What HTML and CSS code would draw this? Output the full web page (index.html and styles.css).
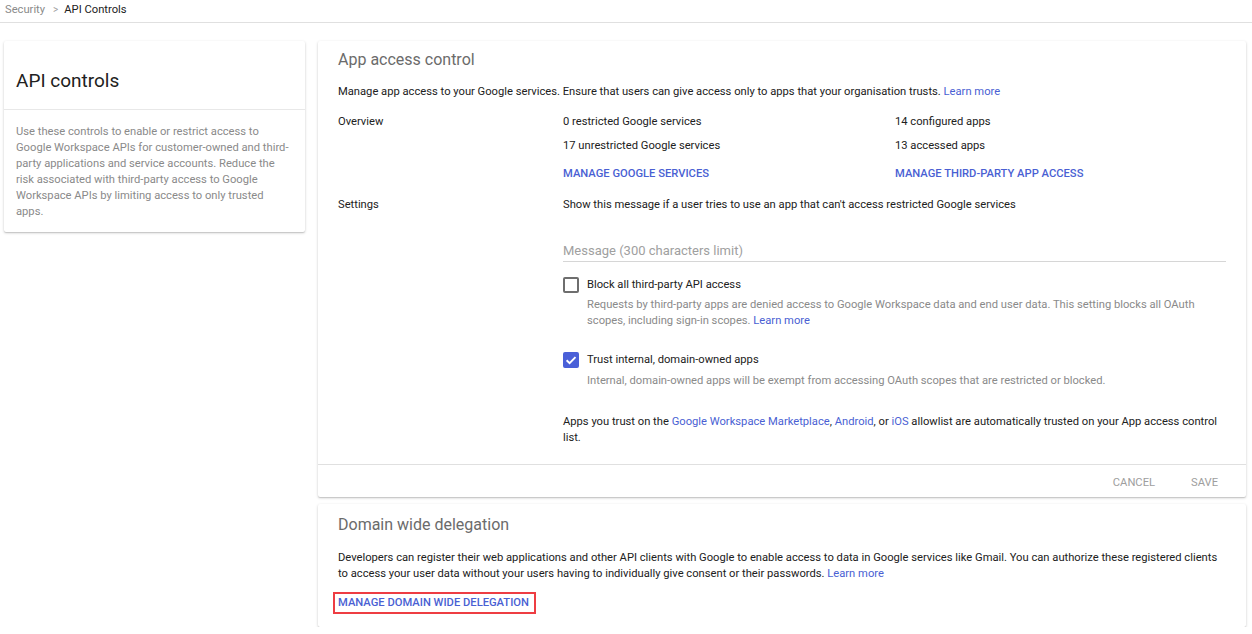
FILE: index.html
```html
<!DOCTYPE html>
<html>
<head>
<meta charset="utf-8">
<link rel="stylesheet" href="styles.css">
</head>
<body>
<div class="crumbs"><span class="crumb-prev">Security</span><span class="crumb-sep">&gt;</span><span class="crumb-cur">API Controls</span></div>
<div class="main">
  <div class="card side">
    <div class="side-title">API controls</div>
    <div class="side-desc">Use these controls to enable or restrict access to Google Workspace APIs for customer-owned and third-party applications and service accounts. Reduce the risk associated with third-party access to Google Workspace APIs by limiting access to only trusted apps.</div>
  </div>
  <div class="col">
    <div class="card panel">
      <div class="panel-body">
        <div class="panel-title">App access control</div>
        <div class="panel-desc">Manage app access to your Google services. Ensure that users can give access only to apps that your organisation trusts. <a class="link">Learn more</a></div>
        <div class="overview">
          <div class="label">Overview</div>
          <div class="ov-col">
            <div class="ov-item">0 restricted Google services</div>
            <div class="ov-item">17 unrestricted Google services</div>
            <div class="action">MANAGE GOOGLE SERVICES</div>
          </div>
          <div class="ov-col">
            <div class="ov-item">14 configured apps</div>
            <div class="ov-item">13 accessed apps</div>
            <div class="action">MANAGE THIRD-PARTY APP ACCESS</div>
          </div>
        </div>
        <div class="settings">
          <div class="label">Settings</div>
          <div class="set-body">
            <div class="set-intro">Show this message if a user tries to use an app that can't access restricted Google services</div>
            <div class="field">Message (300 characters limit)</div>
            <div class="check-row">
              <span class="box"></span>
              <div class="check-text">
                <div class="check-label">Block all third-party API access</div>
                <div class="check-desc">Requests by third-party apps are denied access to Google Workspace data and end user data. This setting blocks all OAuth scopes, including sign-in scopes. <a class="link">Learn more</a></div>
              </div>
            </div>
            <div class="check-row second">
              <span class="box on"><svg viewBox="0 0 16 16" width="16" height="16"><path d="M3.6 8.3 L6.6 11.2 L12.5 5.2" fill="none" stroke="#fff" stroke-width="1.9"/></svg></span>
              <div class="check-text">
                <div class="check-label">Trust internal, domain-owned apps</div>
                <div class="check-desc second-desc">Internal, domain-owned apps will be exempt from accessing OAuth scopes that are restricted or blocked.</div>
              </div>
            </div>
            <div class="trust">Apps you trust on the <a class="link">Google Workspace Marketplace</a>, <a class="link">Android</a>, or <a class="link">iOS</a> allowlist are automatically trusted on your App access control list.</div>
          </div>
        </div>
      </div>
      <div class="panel-foot">
        <span class="btn">CANCEL</span>
        <span class="btn">SAVE</span>
      </div>
    </div>
    <div class="card panel dwd">
      <div class="panel-title">Domain wide delegation</div>
      <div class="panel-desc dwd-desc">Developers can register their web applications and other API clients with Google to enable access to data in Google services like Gmail. You can authorize these registered clients to access your user data without your users having to individually give consent or their passwords. <a class="link">Learn more</a></div>
      <div class="dwd-action"><span class="hl">MANAGE DOMAIN WIDE DELEGATION</span></div>
    </div>
  </div>
</div>
</body>
</html>
```

FILE: styles.css
```css
html, body {
  margin: 0;
  padding: 0;
  background: #ffffff;
  font-family: Roboto, "Noto Sans", Arial, sans-serif;
  color: #212121;
  font-size: 11.2px;
}
.crumbs {
  height: 20px;
  padding-top: 2px;
  border-bottom: 1px solid #e0e0e0;
  padding-left: 5px;
  display: flex;
  align-items: flex-start;
  font-size: 11.2px;
  line-height: 16px;
}
.crumb-prev { color: #8a8a8a; }
.crumb-sep { color: #9e9e9e; margin: 0 6px 0 8px; font-size: 10px; }
.crumb-cur { color: #212121; }
.main {
  display: flex;
  align-items: flex-start;
  gap: 13px;
  padding: 18px 6px 0 4px;
}
.card {
  background: #fff;
  box-shadow: 0 1px 3px rgba(0,0,0,0.18), 0 1px 1px rgba(0,0,0,0.12);
  border-radius: 2px;
}
.side {
  width: 301px;
  flex: none;
}
.side-title {
  height: 69px;
  box-sizing: border-box;
  padding: 28px 12px 0;
  font-size: 19px;
  line-height: 24px;
  color: #212121;
  border-bottom: 1px solid #e8e8e8;
}
.side-desc {
  padding: 14px 14px 12px 12px;
  font-size: 11.2px;
  line-height: 16px;
  color: #8a8a8a;
}
.col {
  flex: 1;
  display: flex;
  flex-direction: column;
  gap: 7px;
}
.panel-body {
  padding: 9px 20px 18px;
}
.panel-title {
  font-size: 16px;
  line-height: 20px;
  color: #6b6b6b;
}
.panel-desc {
  margin-top: 14px;
  line-height: 16px;
  color: #212121;
}
.link { color: #4a5fd3; text-decoration: none; }
.overview {
  display: grid;
  grid-template-columns: 225px 332px 1fr;
  margin-top: 14px;
}
.label { line-height: 16px; }
.ov-item { line-height: 16px; margin-bottom: 8px; }
.action {
  margin-top: 12px;
  color: #4a5fd3;
  font-weight: 500;
  line-height: 16px;
}
.settings {
  display: grid;
  grid-template-columns: 225px 1fr;
  margin-top: 15px;
}
.set-intro { line-height: 16px; }
.field {
  margin-top: 28px;
  font-size: 13px;
  line-height: 20px;
  padding-bottom: 0;
  color: #a0a0a0;
  border-bottom: 1px solid #d6d6d6;
}
.check-row {
  display: flex;
  margin-top: 15px;
}
.check-row.second { margin-top: 23px; }
.box {
  width: 16px;
  height: 16px;
  box-sizing: border-box;
  border: 2px solid #6e6e6e;
  border-radius: 2px;
  flex: none;
  margin-top: 0;
  display: flex;
}
.box.on {
  background: #4a60d8;
  border-color: #4a60d8;
}
.box.on svg { margin: -2px; }
.check-text { margin-left: 8px; }
.check-label { line-height: 16px; color: #212121; }
.check-desc {
  margin-top: 4px;
  line-height: 16px;
  color: #8a8a8a;
  font-size: 11.2px;
}
.check-desc.second-desc { margin-top: 5px; }
.trust {
  margin-top: 25px;
  line-height: 16px;
}
.panel-foot {
  border-top: 1px solid #e0e0e0;
  box-sizing: border-box;
  height: 33px;
  padding-top: 2px;
  display: flex;
  justify-content: flex-end;
  align-items: center;
  gap: 36px;
  padding-right: 28px;
}
.btn {
  color: #9e9e9e;
  font-size: 11.2px;
}
.dwd {
  padding: 11px 20px 13px;
}
.dwd-desc { margin-top: 15px; }
.dwd-action { margin-top: 10px; }
.hl {
  display: inline-block;
  margin-left: -5px;
  padding: 1px 5px 1px 3px;
  border: 2px solid #ee3d43;
  color: #4a5fd3;
  font-weight: 500;
  line-height: 16px;
}
```
